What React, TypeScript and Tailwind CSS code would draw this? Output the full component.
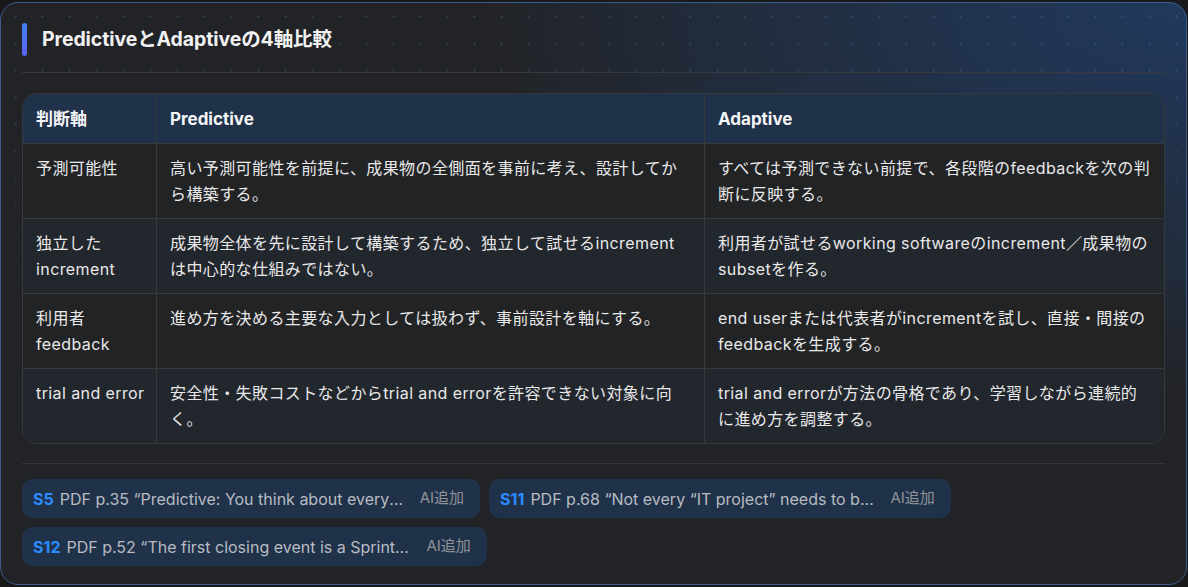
import React from "react";

const rows = [
  {
    axis: "予測可能性",
    predictive: "高い予測可能性を前提に、成果物の全側面を事前に考え、設計してから構築する。",
    adaptive: "すべては予測できない前提で、各段階のfeedbackを次の判断に反映する。",
  },
  {
    axis: "独立した increment",
    predictive: "成果物全体を先に設計して構築するため、独立して試せるincrementは中心的な仕組みではない。",
    adaptive: "利用者が試せるworking softwareのincrement／成果物のsubsetを作る。",
  },
  {
    axis: "利用者feedback",
    predictive: "進め方を決める主要な入力としては扱わず、事前設計を軸にする。",
    adaptive: "end userまたは代表者がincrementを試し、直接・間接のfeedbackを生成する。",
  },
  {
    axis: "trial and error",
    predictive: "安全性・失敗コストなどからtrial and errorを許容できない対象に向く。",
    adaptive: "trial and errorが方法の骨格であり、学習しながら連続的に進め方を調整する。",
  },
];

const sources = [
  { id: "S5", text: "PDF p.35 “Predictive: You think about every aspect of the product up front”" },
  { id: "S11", text: "PDF p.68 “Not every “IT project” needs to be done with Scrum”" },
  { id: "S12", text: "PDF p.52 “The first closing event is a Sprint Review”" },
];

const font = "font-['Inter','Noto_Sans_CJK_JP',sans-serif]";

export default function App() {
  return (
    <div className={`h-[587px] w-[1188px] bg-[#19191b] pt-[2px] ${font}`}>
      <div className="relative h-[583px] w-[1187px] overflow-hidden rounded-[18px] border-[1.5px] border-[#3a5d8a] bg-[#222326] bg-[radial-gradient(ellipse_75%_85%_at_100%_0%,rgba(33,58,96,0.95),rgba(33,58,96,0.35)_55%,transparent_80%)]">
        {/* dot grid */}
        <div className="pointer-events-none absolute inset-0 bg-[radial-gradient(circle,rgba(90,130,190,0.22)_1px,transparent_1.3px)] bg-[length:27px_27px] bg-[position:1px_0px] [mask-image:linear-gradient(to_bottom,black,black_15%,transparent_55%)]" />

        <div className="relative flex h-full flex-col px-[21px] pt-[20px]">
          {/* TITLE */}
          <div className="flex h-[33px] items-center gap-[15px]">
            <div className="h-[33px] w-[5px] rounded-full bg-gradient-to-b from-[#3b82f6] to-[#5b5ff0]" />
            <h2 className="text-[19.5px] font-bold tracking-[-0.1px] text-[#f2f2f3]">
              PredictiveとAdaptiveの4軸比較
            </h2>
          </div>

          <div className="mt-[16px] h-px bg-[#38393d]" />

          {/* TABLE */}
          <div className="mt-[20px] overflow-hidden rounded-[14px] border border-[#38393d]">
            <div className="grid grid-cols-[134px_548px_1fr] bg-[#20324a] text-[17px] font-bold leading-[25px] text-[#f4f5f7]">
              <div className="border-b border-r border-[#38393d] px-[13px] pb-[11px] pt-[13px]">判断軸</div>
              <div className="border-b border-r border-[#38393d] px-[13px] pb-[11px] pt-[13px]">Predictive</div>
              <div className="border-b border-[#38393d] px-[13px] pb-[11px] pt-[13px]">Adaptive</div>
            </div>
            {rows.map((r, i) => (
              <div
                key={r.axis}
                className={`grid grid-cols-[134px_548px_1fr] text-[16px] leading-[26px] tracking-[0.4px] text-[#e9e9ea] ${
                  i % 2 === 0 ? "bg-[#222325]" : "bg-[#22262d]"
                }`}
              >
                <div className={`border-r border-[#38393d] py-[11px] pl-[13px] pr-[6px] ${i < 3 ? "border-b" : ""}`}>
                  {r.axis}
                </div>
                <div className={`border-r border-[#38393d] px-[13px] py-[11px] ${i < 3 ? "border-b" : ""}`}>
                  {r.predictive}
                </div>
                <div className={`border-[#38393d] py-[11px] pl-[13px] pr-[12.5px] ${i < 3 ? "border-b" : ""}`}>
                  {r.adaptive}
                </div>
              </div>
            ))}
          </div>

          <div className="mt-[19px] h-px bg-[#343539]" />

          {/* SOURCES */}
          <div className="mt-[15px] flex flex-wrap gap-[9px]">
            {sources.map((s) => (
              <div
                key={s.id}
                className="flex h-[39px] items-center rounded-[10px] bg-[#20324a] pl-[11px] pr-[16px] text-[16px]"
              >
                <span className="font-bold text-[#2b8cff]">{s.id}</span>
                <span className="ml-[6px] max-w-[345px] truncate text-[#b8bbc1]">{s.text}</span>
                <span className="ml-[15px] text-[15px] text-[#8f9297]">AI追加</span>
              </div>
            ))}
          </div>
        </div>
      </div>
    </div>
  );
}
